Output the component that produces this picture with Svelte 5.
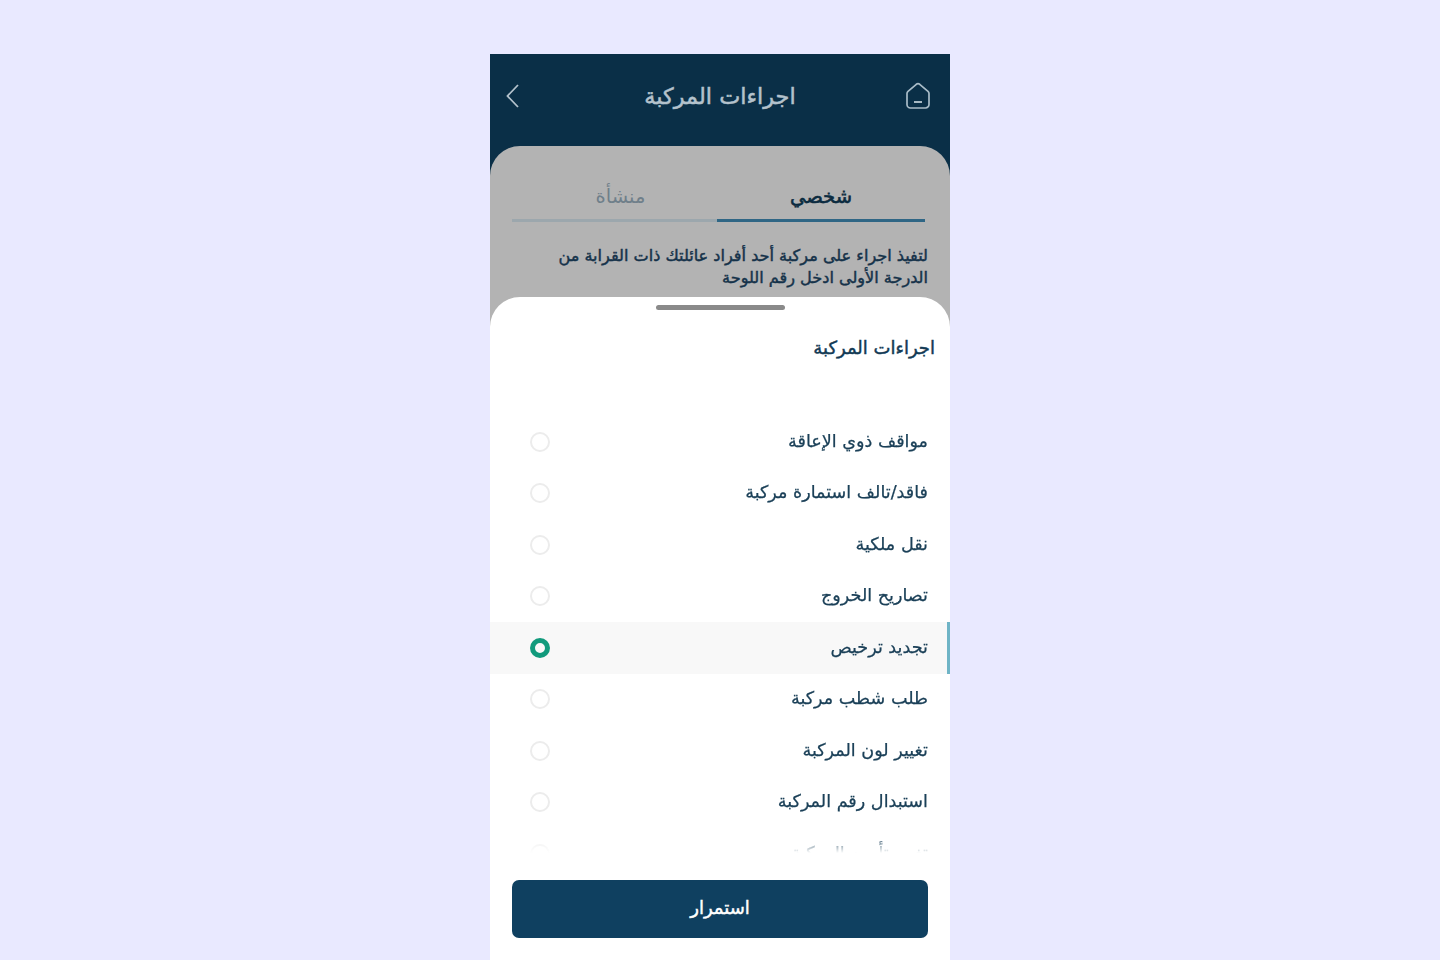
<script>
    const actions = [
        "مواقف ذوي الإعاقة",
        "فاقد/تالف استمارة مركبة",
        "نقل ملكية",
        "تصاريح الخروج",
        "تجديد ترخيص",
        "طلب شطب مركبة",
        "تغيير لون المركبة",
        "استبدال رقم المركبة",
        "تغيير تأمين المركبة",
    ];
    let selected = $state(4);
</script>

<div class="phone" dir="rtl">
    <header class="top">
        <svg class="icon" width="26" height="28" viewBox="0 0 26 28" fill="none" stroke="#a9bcc8" stroke-width="1.7">
            <path d="M2 11.5 Q2 10.2 3 9.3 L11.3 2.3 Q13 1 14.7 2.3 L23 9.3 Q24 10.2 24 11.5 V22.5 A3.5 3.5 0 0 1 20.5 26 H5.5 A3.5 3.5 0 0 1 2 22.5 Z" stroke-linejoin="round" />
            <path d="M9 20 H17" stroke="#c5d2da" />
        </svg>
        <h1>اجراءات المركبة</h1>
        <svg class="icon back" width="16" height="26" viewBox="0 0 16 26" fill="none" stroke="#b4c2cc" stroke-width="1.8">
            <path d="M13 2 L2.5 13 L13 24" />
        </svg>
    </header>

    <main class="body">
        <div class="tabs">
            <div class="tab active">شخصي</div>
            <div class="tab">منشأة</div>
        </div>
        <p class="hint">لتفيذ اجراء على مركبة أحد أفراد عائلتك ذات القرابة من الدرجة الأولى ادخل رقم اللوحة</p>
    </main>

    <section class="sheet">
        <div class="grabber"></div>
        <h2>اجراءات المركبة</h2>
        <ul class="list">
            {#each actions as label, i}
                <li class="row" class:on={selected === i}>
                    <button class="row-btn" onclick={() => (selected = i)}>
                        <span class="label">{label}</span>
                        <span class="radio"></span>
                    </button>
                </li>
            {/each}
        </ul>
        <div class="footer">
            <button class="cta">استمرار</button>
        </div>
    </section>
</div>

<style>
    :global(body) {
        background: #e9e9ff;
        height: 960px;
        overflow: hidden;
    }
    .phone {
        position: relative;
        width: 460px;
        height: 906px;
        margin: 54px auto 0;
        overflow: hidden;
        background: #0a2f47;
        font-family: "DejaVu Sans", sans-serif;
    }
    .top {
        height: 92px;
        box-sizing: border-box;
        padding: 0 19px 8px;
        display: grid;
        grid-template-columns: 1fr auto 1fr;
        align-items: center;
    }
    .icon {
        display: block;
    }
    .back {
        justify-self: end;
        margin-left: -4px;
    }
    h1 {
        margin: 0;
        font-size: 22.4px;
        font-weight: 400;
        -webkit-text-stroke: 0.5px #b4c2cc;
        color: #b4c2cc;
    }
    .body {
        height: 814px;
        box-sizing: border-box;
        padding: 34px 25px 0 22px;
        background: #b3b3b3;
        border-radius: 30px 30px 0 0;
    }
    .tabs {
        display: flex;
    }
    .tab {
        flex: 1;
        height: 42px;
        padding-left: 12px;
        text-align: center;
        font-size: 19.5px;
        line-height: 34px;
        color: #6f7f8a;
        border-bottom: 3px solid #9ca7ad;
        box-sizing: border-box;
    }
    .tab.active {
        flex: none;
        width: 208px;
        padding-left: 0;
        color: #0b2b40;
        -webkit-text-stroke: 0.6px #0b2b40;
        border-bottom-color: #2f6685;
    }
    .hint {
        max-width: 400px;
        margin: 23px -3px 0 0;
        font-size: 16.1px;
        line-height: 22px;
        -webkit-text-stroke: 0.45px #15324a;
        color: #15324a;
    }
    .sheet {
        position: absolute;
        left: 0;
        right: 0;
        top: 243px;
        bottom: 0;
        display: flex;
        flex-direction: column;
        background: #fff;
        border-radius: 30px 30px 0 0;
    }
    .grabber {
        width: 129px;
        height: 5px;
        margin: 8px auto 0;
        border-radius: 3px;
        background: #8a8a8a;
    }
    h2 {
        margin: 25px 15px 0 0;
        font-size: 18px;
        line-height: 26px;
        font-weight: 400;
        -webkit-text-stroke: 0.45px #123a55;
        color: #123a55;
    }
    .list {
        list-style: none;
        margin: 55px 0 0;
        padding: 0;
        height: 439px;
        overflow: hidden;
        mask-image: linear-gradient(#000 calc(100% - 20px), transparent calc(100% - 2px));
    }
    .row {
        height: 51.5px;
    }
    .row.on {
        background: #f8f8f8;
        border-right: 3px solid #6fb4c6;
    }
    .row-btn {
        width: 100%;
        height: 100%;
        padding: 0 22px 0 0;
        display: flex;
        align-items: center;
        justify-content: space-between;
        border: 0;
        background: none;
        font: inherit;
        color: #1b4058;
    }
    .row.on .row-btn {
        padding-right: 19px;
    }
    .label {
        padding-bottom: 2px;
        font-size: 17.6px;
        -webkit-text-stroke: 0.25px #1b4058;
    }
    .radio {
        width: 20px;
        height: 20px;
        margin-left: 40px;
        box-sizing: border-box;
        border: 2px solid #ececec;
        border-radius: 50%;
    }
    .row.on .radio {
        border: 5px solid #119a7c;
    }
    .footer {
        padding: 25px 22px 0;
    }
    .cta {
        width: 100%;
        height: 58px;
        padding: 0 0 4px;
        border: 0;
        border-radius: 7px;
        background: #0f4060;
        color: #fff;
        font: inherit;
        font-size: 18px;
        -webkit-text-stroke: 0.45px #fff;
    }
</style>
